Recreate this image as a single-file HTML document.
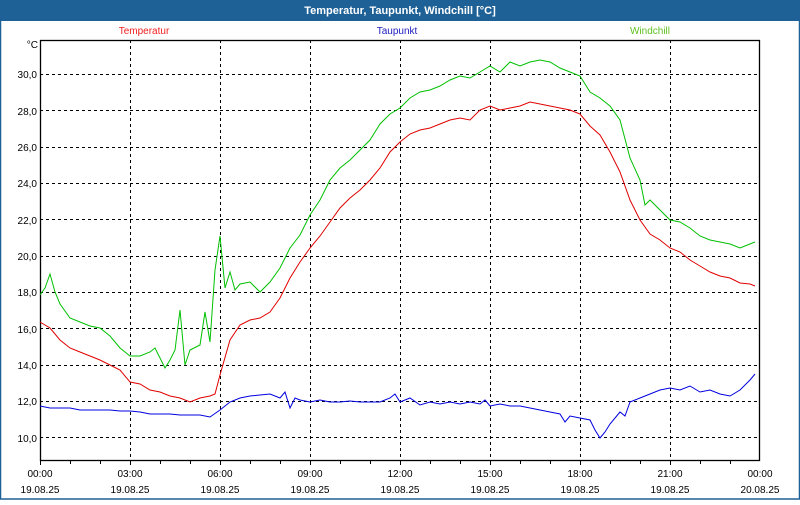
<!DOCTYPE html>
<html><head><style>
body{margin:0;width:800px;height:500px;overflow:hidden;background:#fff;font-family:"Liberation Sans",sans-serif}
</style></head><body>
<svg width="800" height="500" xmlns="http://www.w3.org/2000/svg" font-family="Liberation Sans, sans-serif" font-size="10">
<rect x="0" y="0" width="800" height="500" fill="#fff"/>
<rect x="0" y="0" width="800" height="21" fill="#1e6196"/>
<rect x="0.5" y="20" width="799" height="479" fill="none" stroke="#1e6196" stroke-width="1.5"/>
<text x="400" y="14" text-anchor="middle" fill="#fff" font-weight="bold" font-size="11">Temperatur, Taupunkt, Windchill [°C]</text>
<text x="144" y="34" text-anchor="middle" fill="#f02020">Temperatur</text>
<text x="397" y="34" text-anchor="middle" fill="#2020c0">Taupunkt</text>
<text x="650" y="34" text-anchor="middle" fill="#60c020">Windchill</text>
<g stroke="#000" stroke-dasharray="3,3" stroke-width="1">
<line x1="130.5" y1="40" x2="130.5" y2="460"/><line x1="220.5" y1="40" x2="220.5" y2="460"/>
<line x1="310.5" y1="40" x2="310.5" y2="460"/><line x1="400.5" y1="40" x2="400.5" y2="460"/>
<line x1="490.5" y1="40" x2="490.5" y2="460"/><line x1="580.5" y1="40" x2="580.5" y2="460"/>
<line x1="670.5" y1="40" x2="670.5" y2="460"/>
<line x1="40" y1="74.5" x2="760" y2="74.5"/><line x1="40" y1="110.5" x2="760" y2="110.5"/>
<line x1="40" y1="147.5" x2="760" y2="147.5"/><line x1="40" y1="183.5" x2="760" y2="183.5"/>
<line x1="40" y1="219.5" x2="760" y2="219.5"/><line x1="40" y1="256.5" x2="760" y2="256.5"/>
<line x1="40" y1="292.5" x2="760" y2="292.5"/><line x1="40" y1="328.5" x2="760" y2="328.5"/>
<line x1="40" y1="365.5" x2="760" y2="365.5"/><line x1="40" y1="401.5" x2="760" y2="401.5"/>
<line x1="40" y1="437.5" x2="760" y2="437.5"/>
</g>
<rect x="40.5" y="40.5" width="719" height="420" fill="none" stroke="#000" stroke-width="1.3"/>
<g stroke="#000"><line x1="40.5" y1="461" x2="40.5" y2="465"/><line x1="70.5" y1="461" x2="70.5" y2="464"/><line x1="100.5" y1="461" x2="100.5" y2="464"/><line x1="130.5" y1="461" x2="130.5" y2="465"/><line x1="160.5" y1="461" x2="160.5" y2="464"/><line x1="190.5" y1="461" x2="190.5" y2="464"/><line x1="220.5" y1="461" x2="220.5" y2="465"/><line x1="250.5" y1="461" x2="250.5" y2="464"/><line x1="280.5" y1="461" x2="280.5" y2="464"/><line x1="310.5" y1="461" x2="310.5" y2="465"/><line x1="340.5" y1="461" x2="340.5" y2="464"/><line x1="370.5" y1="461" x2="370.5" y2="464"/><line x1="400.5" y1="461" x2="400.5" y2="465"/><line x1="430.5" y1="461" x2="430.5" y2="464"/><line x1="460.5" y1="461" x2="460.5" y2="464"/><line x1="490.5" y1="461" x2="490.5" y2="465"/><line x1="520.5" y1="461" x2="520.5" y2="464"/><line x1="550.5" y1="461" x2="550.5" y2="464"/><line x1="580.5" y1="461" x2="580.5" y2="465"/><line x1="610.5" y1="461" x2="610.5" y2="464"/><line x1="640.5" y1="461" x2="640.5" y2="464"/><line x1="670.5" y1="461" x2="670.5" y2="465"/><line x1="700.5" y1="461" x2="700.5" y2="464"/><line x1="730.5" y1="461" x2="730.5" y2="464"/></g>
<g text-anchor="end" fill="#000">
<text x="38" y="48">°C</text>
<text x="37" y="78">30,0</text><text x="37" y="115">28,0</text><text x="37" y="151">26,0</text><text x="37" y="187">24,0</text><text x="37" y="224">22,0</text><text x="37" y="260">20,0</text><text x="37" y="296">18,0</text><text x="37" y="333">16,0</text><text x="37" y="369">14,0</text><text x="37" y="405">12,0</text><text x="37" y="442">10,0</text>
</g>
<g text-anchor="middle" fill="#000">
<text x="40" y="477">00:00</text><text x="40" y="493">19.08.25</text>
<text x="130" y="477">03:00</text><text x="130" y="493">19.08.25</text>
<text x="220" y="477">06:00</text><text x="220" y="493">19.08.25</text>
<text x="310" y="477">09:00</text><text x="310" y="493">19.08.25</text>
<text x="400" y="477">12:00</text><text x="400" y="493">19.08.25</text>
<text x="490" y="477">15:00</text><text x="490" y="493">19.08.25</text>
<text x="580" y="477">18:00</text><text x="580" y="493">19.08.25</text>
<text x="670" y="477">21:00</text><text x="670" y="493">19.08.25</text>
<text x="760" y="477">00:00</text><text x="760" y="493">20.08.25</text>
</g>
<g fill="none" stroke-width="1">
<polyline stroke="#00c000" points="40,295 45,288 50,274 55,292 60,304 70,318 80,322 90,326 100,328 110,336 120,348 125,352 130,356 140,356 150,352 155,348 160,358 165,368 170,360 175,350 180,310 185,365 190,350 200,345 205,312 210,342 215,270 220,236 225,288 230,272 235,290 240,284 250,282 260,292 270,282 280,268 290,248 300,235 310,215 320,200 330,180 340,168 350,160 360,150 370,140 380,124 390,114 400,108 410,98 420,92 430,90 440,86 450,80 460,76 470,78 480,72 490,66 500,72 510,62 520,66 530,62 540,60 550,62 560,68 570,72 580,76 590,92 600,98 610,106 620,120 630,158 640,180 645,205 650,200 660,210 670,220 680,222 690,228 700,236 710,240 720,242 730,244 740,248 750,244 755,242"/>
<polyline stroke="#e00000" points="40,322 50,328 60,340 70,348 80,352 90,356 100,360 110,365 120,370 130,382 140,384 150,390 160,392 170,396 180,398 190,402 200,398 210,396 215,394 220,375 230,340 240,325 250,320 260,318 270,312 280,298 290,278 300,262 310,248 320,236 330,222 340,208 350,198 360,190 370,180 380,168 390,152 400,142 410,134 420,130 430,128 440,124 450,120 460,118 470,120 480,110 490,106 500,110 510,108 520,106 530,102 540,104 550,106 560,108 570,110 580,114 590,126 600,135 610,152 620,172 630,200 640,220 650,234 660,240 670,248 680,252 690,260 700,266 710,272 720,276 730,278 740,283 750,284 755,286"/>
<polyline stroke="#0000e0" points="40,406 50,408 60,408 70,408 80,410 90,410 100,410 110,410 120,411 130,411 140,412 150,414 160,414 170,414 180,415 190,415 200,415 210,417 220,410 230,402 240,398 250,396 260,395 270,394 280,398 285,392 290,408 295,398 300,400 310,402 320,400 330,402 340,402 350,401 360,402 370,402 380,402 390,398 395,394 400,402 410,398 420,405 430,402 440,404 450,402 460,404 470,402 480,404 485,400 490,406 500,404 510,406 520,406 530,408 540,410 550,412 560,414 565,422 570,416 580,418 590,420 595,430 600,438 605,432 610,424 620,412 625,416 630,402 640,398 650,394 660,390 670,388 680,390 690,386 700,392 710,390 720,394 730,396 740,390 750,380 755,374"/>
</g>
</svg>
</body></html>
